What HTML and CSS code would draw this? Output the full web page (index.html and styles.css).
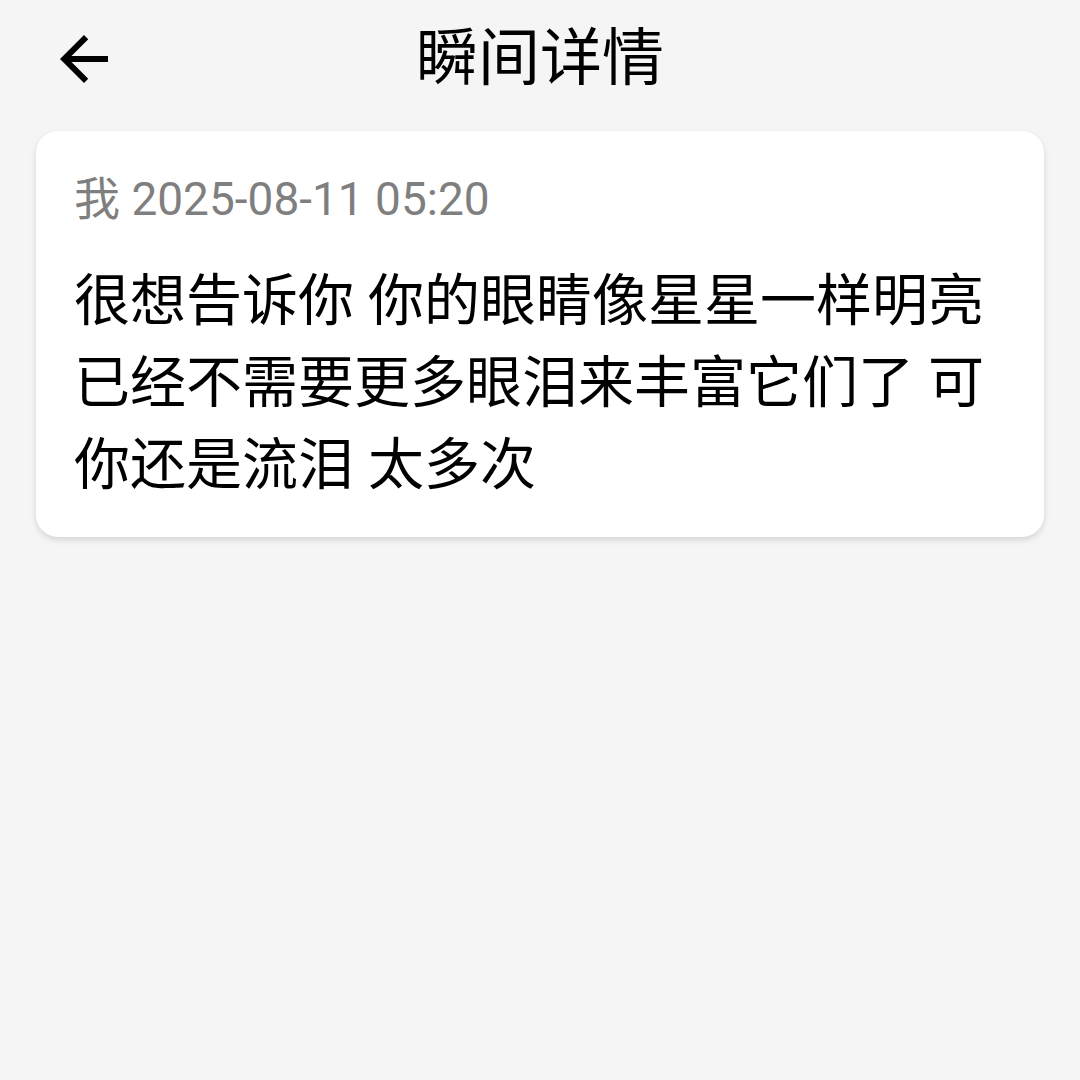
FILE: index.html
```html
<!DOCTYPE html>
<html lang="zh-CN">
<head>
<meta charset="utf-8">
<link rel="stylesheet" href="styles.css">
</head>
<body>
<header class="topbar">
  <div class="back">
    <svg class="back-icon" viewBox="0 0 24 24" width="72" height="72"><path d="M20 11H7.83l5.59-5.59L12 4l-8 8 8 8 1.41-1.41L7.83 13H20v-2z" fill="#000"/></svg>
  </div>
  <h1 class="title">瞬间详情</h1>
  <div class="spacer"></div>
</header>
<main class="content">
  <article class="card">
    <div class="meta">我 2025-08-11 05:20</div>
    <p class="body">很想告诉你 你的眼睛像星星一样明亮已经不需要更多眼泪来丰富它们了 可你还是流泪 太多次</p>
  </article>
</main>
</body>
</html>
```
FILE: styles.css
```css
html, body {
  margin: 0;
  padding: 0;
  background: #f5f5f5;
  font-family: Roboto, "Noto Sans CJK SC", sans-serif;
  width: 1080px;
  height: 1080px;
}
.topbar {
  height: 114px;
  display: grid;
  grid-template-columns: 1fr auto 1fr;
  align-items: center;
}
.back {
  padding-left: 48px;
  display: flex;
  align-items: center;
  padding-top: 4px;
}
.back-icon {
  display: block;
}
.title {
  margin: 0 0 8px;
  font-size: 62px;
  font-weight: 400;
  color: #000;
  font-family: "Noto Sans CJK SC", sans-serif;
  line-height: 1.2;
}
.content {
  padding: 17px 36px 0;
}
.card {
  background: #fff;
  border-radius: 22px;
  box-shadow: 0 3px 6px rgba(0, 0, 0, 0.13);
  padding: 42px 38px 31px;
}
.meta {
  font-size: 46px;
  line-height: 53px;
  color: #7f7f7f;
}
.body {
  margin: 34px 0 0;
  font-size: 56px;
  line-height: 82px;
  color: #000;
}
```
